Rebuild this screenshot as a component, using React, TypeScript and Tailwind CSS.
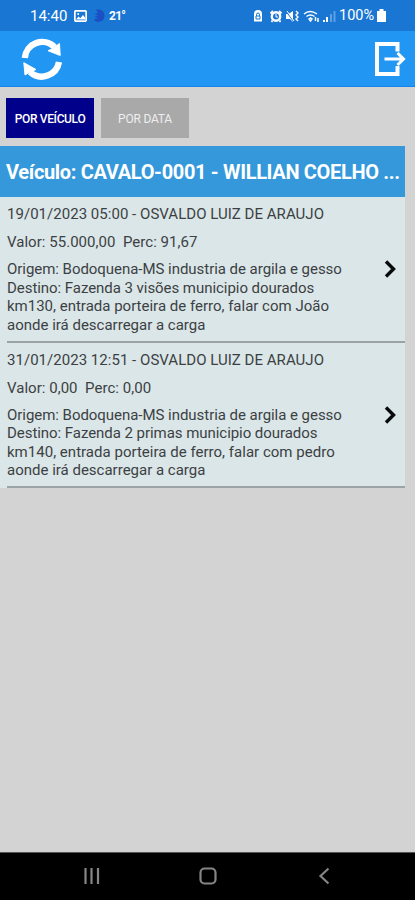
import React from "react";

interface Trip {
  title: string;
  values: string;
  lines: { text: string; tracking: string }[];
}

const trips: Trip[] = [
  {
    title: "19/01/2023 05:00 - OSVALDO LUIZ DE ARAUJO",
    values: "Valor: 55.000,00  Perc: 91,67",
    lines: [
      { text: "Origem: Bodoquena-MS industria de argila e gesso", tracking: "tracking-[-0.04px]" },
      { text: "Destino: Fazenda 3 visões municipio dourados", tracking: "tracking-[-0.05px]" },
      { text: "km130, entrada porteira de ferro, falar com João", tracking: "tracking-normal" },
      { text: "aonde irá descarregar a carga", tracking: "tracking-normal" },
    ],
  },
  {
    title: "31/01/2023 12:51 - OSVALDO LUIZ DE ARAUJO",
    values: "Valor: 0,00  Perc: 0,00",
    lines: [
      { text: "Origem: Bodoquena-MS industria de argila e gesso", tracking: "tracking-[-0.04px]" },
      { text: "Destino: Fazenda 2 primas municipio dourados", tracking: "tracking-[-0.05px]" },
      { text: "km140, entrada porteira de ferro, falar com pedro", tracking: "tracking-[0.02px]" },
      { text: "aonde irá descarregar a carga", tracking: "tracking-normal" },
    ],
  },
];

function StatusBar() {
  return (
    <div className="flex h-[31px] items-center bg-[#1976d2] pl-[30px] text-white">
      <span className="w-[38px] whitespace-nowrap pt-px text-[15px] leading-none">14:40</span>
      <svg className="ml-[6px] h-[12px] w-[13px]" viewBox="0 0 13 12">
        <rect x="0.8" y="0.8" width="11.4" height="10.4" rx="1.5" fill="none" stroke="white" strokeWidth="1.8" />
        <path d="M2 9.5 4.5 6.5 6.3 8.2 9 5 11 7.5V9.5Z" fill="white" />
        <circle cx="4.2" cy="4" r="1" fill="white" />
      </svg>
      <svg className="ml-[6px] h-[14px] w-[12px]" viewBox="0 0 12 14">
        <path d="M3 1C8-.5 11.5 2.5 11.5 7S7.500 13.500 3 12.700L1 10.500 5.500 9 1 8 5 6.500 1.500 5 5 4Z" fill="#1b4fc4" />
      </svg>
      <span className="ml-[4px] whitespace-nowrap text-[12px] font-bold leading-none tracking-[-0.7px]">21°</span>
      <div className="flex-1" />
      <div className="flex w-[162px] items-center">
        <svg className="h-[16px] w-[85px]" viewBox="0 0 85 16">
          <g fill="white">
            <path d="M1 6a4 4 0 0 1 8 0v7.500H1Z" />
            <path d="M17.500 5.500 20 3M28.500 5.500 26 3M19.500 12.500l-1 1.500M26.500 12.500l1 1.500" stroke="white" strokeWidth="1.800" />
            <path d="M33 6h2.500L40 3v11l-3-3h-4Z" />
          </g>
          <path d="M3.500 8V6.500a1.500 1.500 0 0 1 3 0V8M3 8h4v3H3Z" fill="none" stroke="#1976d2" />
          <circle cx="23" cy="8.500" r="4.200" fill="none" stroke="white" strokeWidth="2.400" />
          <path d="M23 6v3h2" fill="none" stroke="white" />
          <path d="m33 3 8 11" stroke="#1976d2" strokeWidth="1.200" />
          <path d="m34 3 7 10" stroke="white" />
          <path d="m43 3 2 2-2 2 2 2-2 2 2 2" fill="none" stroke="white" strokeWidth="1.400" />
          <path d="M51 6q6-5 13 0M53.500 8.500q4-3 8 0M56 11l1.500-1 1.500 1-1.500 2Z" fill="none" stroke="white" strokeWidth="1.500" />
          <path d="M62.500 9v4M65 10v4" stroke="white" strokeWidth="1.500" />
          <path d="M70 12h2v2h-2ZM73 9h2v5h-2Z" fill="white" />
          <path d="M77 6h2v8h-2ZM80.500 3h2v11h-2Z" fill="#5da0e4" />
        </svg>
        <span className="ml-px w-[36px] whitespace-nowrap pt-[2px] text-[14.500px] leading-none">100%</span>
        <svg className="ml-[2px] h-[13px] w-[9px]" viewBox="0 0 9 13"><path d="M2.500 0h4v2H9v11H0V2h2.500Z" fill="white" /></svg>
      </div>
    </div>
  );
}

function AppBar() {
  return (
    <header className="flex h-[56px] items-center justify-between border-b border-[#1684e8] bg-[#2196f3] pl-[21px] pr-[9px]">
      <svg className="h-[42px] w-[42px]" viewBox="0 0 42 42">
        <path d="M3.800 20A17.500 17.500 0 0 1 33.500 9" fill="none" stroke="white" strokeWidth="6.400" />
        <path d="M38.500 5.500 39.200 17.500 27 12.700 31 11Z" fill="white" stroke="white" strokeLinejoin="round" />
        <path d="M38 24A17.500 17.500 0 0 1 9 34" fill="none" stroke="white" strokeWidth="6.400" />
        <path d="M2.800 24.700 4 37 9 34 15 31.500Z" fill="white" stroke="white" strokeLinejoin="round" />
      </svg>
      <svg className="h-[36px] w-[32px]" viewBox="0 0 32 36" fill="none" stroke="white">
        <path d="M23.500 10.500V3H3v30h20.500v-8" strokeWidth="4" />
        <path d="M10.500 18H29M23.500 12l6 6-6 6" strokeWidth="3" />
      </svg>
    </header>
  );
}

function TripRow({ trip }: { trip: Trip }) {
  return (
    <article className="flex h-[145.500px] flex-col bg-[#dbe6e8] pl-[7px]">
      <div className="flex flex-1 border-b-[2px] border-[#9ba3a7] text-[15px] text-[#3b4143]">
        <div className="w-[377px] whitespace-pre pt-[8px]">
          <p className="text-[15px] leading-[19px] tracking-[0.03px]">{trip.title}</p>
          <p className="mt-[9px] text-[15px] leading-[19px] tracking-[0.03px]">{trip.values}</p>
          <div className="mt-[8px]">
            {trip.lines.map((line) => (
              <p key={line.text} className={`leading-[18.500px] ${line.tracking}`}>{line.text}</p>
            ))}
          </div>
        </div>
        <svg className="mt-[62px] h-[20px] w-[14px]" viewBox="0 0 14 20">
          <path d="m2 2.500 7.500 7.500L2 17.500" fill="none" stroke="#080b0c" strokeWidth="3.400" />
        </svg>
      </div>
    </article>
  );
}

export default function App() {
  return (
    <div className="flex h-[900px] w-[415px] flex-col overflow-hidden bg-[#d3d3d3] font-['Roboto','Liberation_Sans',sans-serif]">
      <StatusBar />
      <AppBar />
      <main className="flex-1">
        <div className="flex gap-[7px] px-[6px] pb-[8px] pt-[11px] text-[12px] text-white">
          <button className="h-[40px] w-[88px] whitespace-nowrap bg-[#00008b] pt-px font-medium tracking-[-0.35px]">POR VEÍCULO</button>
          <button className="h-[40px] w-[88px] whitespace-nowrap bg-[#a9a9a9] pt-px tracking-[-0.2px] text-[#eeeeee]">POR DATA</button>
        </div>
        <section className="w-[405px]">
          <h1 className="h-[51px] whitespace-nowrap bg-[#3498db] pl-[6px] text-[20px] font-bold leading-[53px] tracking-[-0.34px] text-white">Veículo: CAVALO-0001 - WILLIAN COELHO ...</h1>
          {trips.map((trip) => <TripRow key={trip.title} trip={trip} />)}
        </section>
      </main>
      <nav className="flex h-[48px] items-center border-t border-[#555] bg-black pb-[2px]">
        <svg className="ml-[83px] h-[18px] w-[18px]" viewBox="0 0 18 18"><path d="M2.500 1v16M8.500 1v16M15 1v16" stroke="#858585" strokeWidth="2.200" /></svg>
        <svg className="ml-[98px] h-[18px] w-[18px]" viewBox="0 0 18 18"><rect x="1.500" y="1.500" width="15" height="15" rx="4" fill="none" stroke="#858585" strokeWidth="2.200" /></svg>
        <svg className="ml-[101px] h-[18px] w-[12px]" viewBox="0 0 12 18"><path d="m10.500 1.500-8 7.500 8 7.500" fill="none" stroke="#858585" strokeWidth="2.200" /></svg>
      </nav>
    </div>
  );
}
